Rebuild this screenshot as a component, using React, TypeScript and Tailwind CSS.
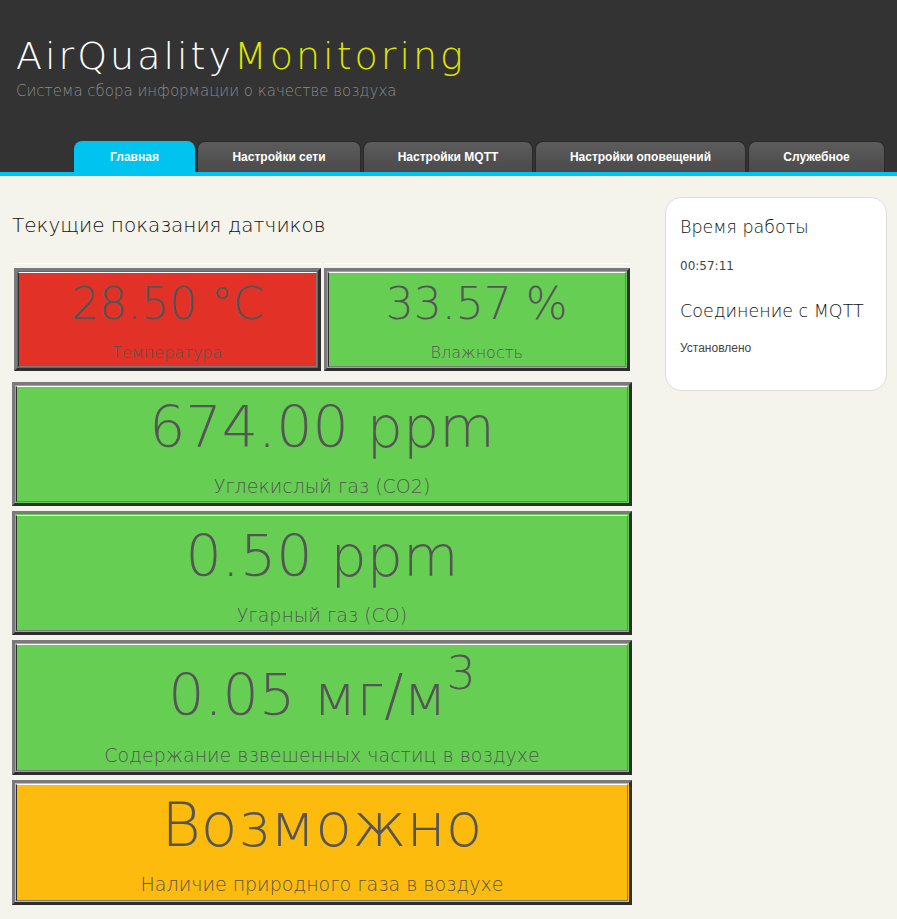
import React from "react";

const gothic = "font-['DejaVu_Sans',sans-serif]";

function Box({
  bg,
  value,
  label,
  valueClass,
  labelClass,
  className,
}: {
  bg: string;
  value: React.ReactNode;
  label: string;
  valueClass: string;
  labelClass: string;
  className?: string;
}) {
  return (
    <div
      className={`border-[3px] border-t-[#7a7a7a] border-l-[#7a7a7a] border-r-[#2e2e2e] border-b-[#2e2e2e] p-px ${bg} ${className ?? ""}`}
    >
      <div className="h-full border border-t-white border-l-[#2e2e2e] border-r-[#7a7a7a] border-b-[#7a7a7a] flex flex-col items-center text-[#555]">
        <div className={`${gothic} font-extralight ${valueClass}`}>{value}</div>
        <div className={`${gothic} font-extralight ${labelClass}`}>{label}</div>
      </div>
    </div>
  );
}

const tabs = [
  { name: "Главная", w: "w-[121px]", active: true },
  { name: "Настройки сети", w: "w-[164px]" },
  { name: "Настройки MQTT", w: "w-[170px]" },
  { name: "Настройки оповещений", w: "w-[211px]" },
  { name: "Служебное", w: "w-[137px]" },
];

export default function App() {
  return (
    <div className="min-h-[919px] bg-[#f4f3ec]">
      {/* Header */}
      <div className="bg-[#333333] h-[172px] flex flex-col">
        <div className="pl-[16px] pt-[33px]">
          <div className={`${gothic} font-extralight text-[38px] leading-[46px] tracking-[3px]`}>
            <span className="text-white">AirQuality</span>
            <span className="text-[#dfe400]">Monitoring</span>
          </div>
          <div className={`${gothic} font-extralight text-[15px] leading-[18px] text-[#8a8a8a] mt-[3px]`}>
            Система сбора информации о качестве воздуха
          </div>
        </div>
        <div className="mt-auto flex gap-[2px] pl-[74px]">
          {tabs.map((t) => (
            <div
              key={t.name}
              className={`${t.w} h-[31px] rounded-t-[8px] flex items-center justify-center font-['Liberation_Sans',sans-serif] font-bold text-[12px] text-white ${
                t.active
                  ? "bg-[#00c3f0]"
                  : "bg-gradient-to-b from-[#5c5c5c] to-[#4a4a4a] border border-b-0 border-[#2a2a2a]"
              }`}
            >
              {t.name}
            </div>
          ))}
        </div>
      </div>
      <div className="h-[4px] bg-[#00c3f0]" />

      {/* Body */}
      <div className="flex pt-[21px]">
        <div className="w-[620px] ml-[12px]">
          <div className={`${gothic} font-extralight text-[20px] leading-[26px] text-[#111] pt-[15px]`}>
            Текущие показания датчиков
          </div>
          <div className="mt-[25px] flex gap-[3px] px-[2px]">
            <div className="flex-1 border-t border-white pt-[4px]">
              <Box
                bg="bg-[#e23127]"
                value="28.50 °C"
                label="Температура"
                valueClass="text-[44px] leading-[56px] mt-[3px]"
                labelClass="text-[16px] leading-[20px] mt-[11px]"
                className="h-[103px]"
              />
            </div>
            <div className="flex-1 border-t border-white pt-[4px]">
              <Box
                bg="bg-[#66cf53]"
                value="33.57 %"
                label="Влажность"
                valueClass="text-[44px] leading-[56px] mt-[3px]"
                labelClass="text-[16px] leading-[20px] mt-[11px]"
                className="h-[103px]"
              />
            </div>
          </div>
          <div className="mt-[11px] flex flex-col gap-[5px]">
            <Box
              bg="bg-[#66cf53]"
              value="674.00 ppm"
              label="Углекислый газ (CO2)"
              valueClass="text-[57px] leading-[76px] mt-[2px]"
              labelClass="text-[19px] leading-[24px] mt-[9px]"
              className="h-[124px]"
            />
            <Box
              bg="bg-[#66cf53]"
              value="0.50 ppm"
              label="Угарный газ (CO)"
              valueClass="text-[57px] leading-[76px] mt-[2px]"
              labelClass="text-[19px] leading-[24px] mt-[9px]"
              className="h-[124px]"
            />
            <Box
              bg="bg-[#66cf53]"
              value={
                <span>
                  0.05 мг/м
                  <span className="relative -top-[26px] text-[46px] leading-none">3</span>
                </span>
              }
              label="Содержание взвешенных частиц в воздухе"
              valueClass="text-[57px] leading-[76px] mt-[12px]"
              labelClass="text-[19px] leading-[24px] mt-[10px]"
              className="h-[135px]"
            />
            <Box
              bg="bg-[#fdbb0d]"
              value="Возможно"
              label="Наличие природного газа в воздухе"
              valueClass="text-[60px] leading-[76px] mt-[2px]"
              labelClass="text-[19px] leading-[24px] mt-[9px]"
              className="h-[125px]"
            />
          </div>
        </div>

        {/* Sidebar */}
        <div className="ml-[33px] w-[222px] h-[194px] bg-white border border-[#dcdcdc] rounded-[16px] px-[14px] pt-[17px]">
          <div className={`${gothic} font-extralight text-[17.5px] leading-[24px] text-[#111]`}>Время работы</div>
          <div className="font-['DejaVu_Sans',sans-serif] text-[12px] leading-[14px] text-[#444] mt-[20px]">00:57:11</div>
          <div className={`${gothic} font-extralight text-[17.5px] leading-[24px] text-[#111] mt-[26px]`}>
            Соединение с MQTT
          </div>
          <div className="font-['Liberation_Sans',sans-serif] text-[12px] leading-[14px] text-[#444] mt-[18px]">Установлено</div>
        </div>
      </div>
    </div>
  );
}
